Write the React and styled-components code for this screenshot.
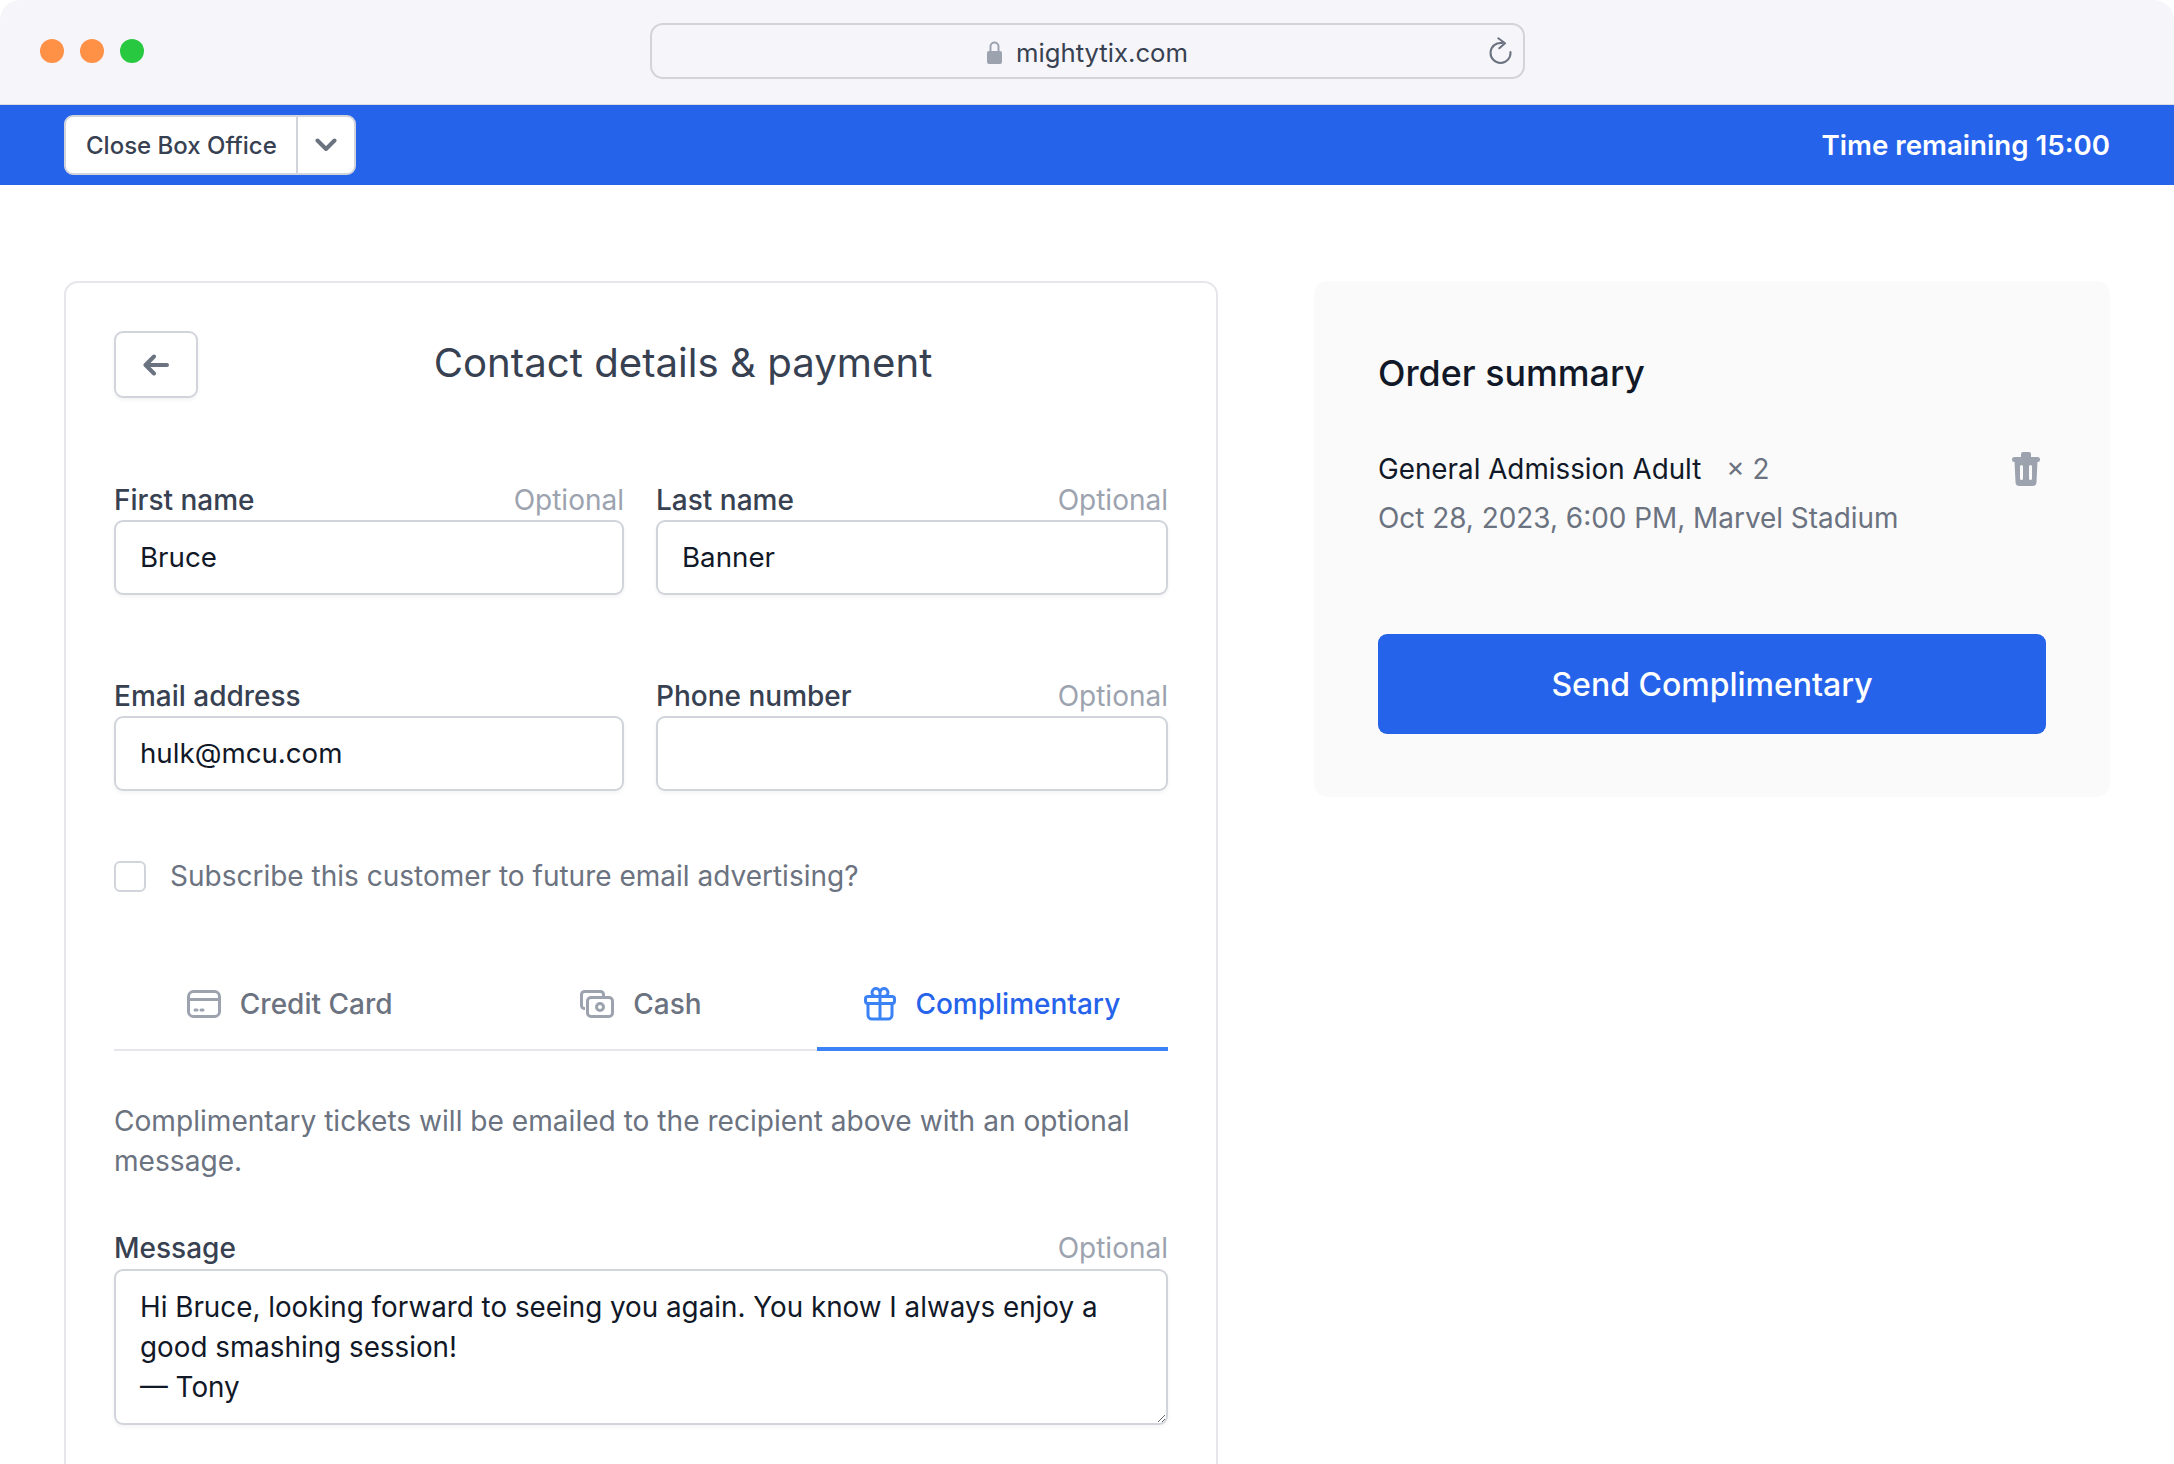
import React from "react";
import styled, { createGlobalStyle } from "styled-components";

const GlobalStyle = createGlobalStyle`
  * { box-sizing: border-box; }
  html, body {
    margin: 0;
    height: 1464px;
    overflow: hidden;
    background: #fff;
    font-family: Inter, "Liberation Sans", sans-serif;
    color: #374151;
  }
`;

const TitleBar = styled.header`
  height: 105px;
  background: #f6f5f9;
  border-bottom: 1px solid #dcdce0;
  border-radius: 20px 20px 0 0;
  display: grid;
  grid-template-columns: 650px 875px 1fr;
  align-items: start;
`;

const Lights = styled.div`
  display: flex;
  gap: 16px;
  padding: 39px 0 0 40px;
`;

const Light = styled.span`
  width: 24px;
  height: 24px;
  border-radius: 50%;
  background: ${({ color }) => color};
`;

const UrlBar = styled.div`
  margin-top: 23px;
  height: 56px;
  border: 2px solid #d3d4d8;
  border-radius: 13px;
  display: flex;
  align-items: center;
  justify-content: center;
  gap: 14px;
  position: relative;
  font-size: 25.7px;
  color: #374151;
  padding-top: 2px;
`;

const Reload = styled.svg`
  position: absolute;
  right: 10px;
  top: 12px;
`;

const BlueBar = styled.div`
  height: 80px;
  background: #2563eb;
  padding: 0 64px;
  display: flex;
  align-items: center;
  justify-content: space-between;
`;

const SplitButton = styled.div`
  width: 292px;
  height: 60px;
  background: #fff;
  border: 2px solid #d1d5db;
  border-radius: 9px;
  display: flex;
`;

const SplitLabel = styled.span`
  flex: 1;
  display: flex;
  align-items: center;
  padding-left: 20px;
  font-size: 24px;
  font-weight: 500;
  color: #374151;
  border-right: 2px solid #d1d5db;
`;

const SplitCaret = styled.span`
  width: 56px;
  display: flex;
  align-items: center;
  justify-content: center;
  color: #6b7280;
`;

const Timer = styled.span`
  color: #fff;
  font-size: 27.7px;
  font-weight: 600;
`;

const Main = styled.main`
  display: grid;
  grid-template-columns: 1154px 796px;
  justify-content: space-between;
  align-items: start;
  padding: 96px 64px 0;
`;

const FormCard = styled.section`
  border: 2px solid #e5e7eb;
  border-radius: 14px;
  padding: 48px 48px 80px;
`;

const CardHeader = styled.div`
  display: flex;
  align-items: center;
  height: 67px;
  margin-bottom: 82px;
`;

const BackButton = styled.button`
  width: 84px;
  height: 67px;
  flex: none;
  background: #fff;
  border: 2px solid #d1d5db;
  border-radius: 9px;
  box-shadow: 0 2px 4px rgba(0, 0, 0, 0.05);
  color: #6b7280;
  display: flex;
  align-items: center;
  justify-content: center;
  padding: 0;
`;

const Title = styled.h1`
  flex: 1;
  margin: -4px 0 0;
  text-align: center;
  font-size: 40.2px;
  font-weight: 400;
  color: #374151;
`;

const FieldGrid = styled.div`
  display: grid;
  grid-template-columns: 510px 512px;
  column-gap: 32px;
  row-gap: 81px;
`;

const FieldHead = styled.div`
  display: flex;
  justify-content: space-between;
  align-items: center;
  height: 40px;
`;

const Label = styled.label`
  font-size: 28px;
  font-weight: 500;
  color: #374151;
`;

const Hint = styled.span`
  font-size: 28px;
  color: #9ca3af;
`;

const Input = styled.input`
  display: block;
  width: 100%;
  height: 75px;
  border: 2px solid #d1d5db;
  border-radius: 9px;
  box-shadow: 0 2px 4px rgba(0, 0, 0, 0.05);
  padding: 0 24px 1px;
  font: 400 27.7px Inter, sans-serif;
  color: #111827;
  outline: none;
`;

const CheckRow = styled.div`
  display: flex;
  align-items: center;
  gap: 24px;
  margin-top: 68px;
  font-size: 28px;
  color: #6b7280;
`;

const CheckBox = styled.span`
  width: 32px;
  height: 31px;
  border: 2px solid #d1d5db;
  border-radius: 6px;
`;

const Tabs = styled.nav`
  display: grid;
  grid-template-columns: repeat(3, 1fr);
  margin-top: 67px;
  border-bottom: 2px solid #e5e7eb;
`;

const Tab = styled.div`
  height: 91px;
  margin-bottom: -2px;
  display: flex;
  align-items: center;
  justify-content: center;
  gap: 19px;
  font-size: 28px;
  font-weight: 500;
  color: ${({ $active }) => ($active ? "#2563eb" : "#6b7280")};
  border-bottom: 4px solid ${({ $active }) => ($active ? "#3b82f6" : "transparent")};
  svg {
    color: ${({ $active }) => ($active ? "#3b82f6" : "#9ca3af")};
  }
`;

const Note = styled.p`
  margin: 50px 0 47px;
  font-size: 28.1px;
  line-height: 40px;
  color: #6b7280;
`;

const Message = styled.textarea`
  display: block;
  width: 100%;
  height: 156px;
  border: 2px solid #d1d5db;
  border-radius: 9px;
  box-shadow: 0 2px 4px rgba(0, 0, 0, 0.05);
  padding: 16px 24px;
  margin-top: 1px;
  font: 400 27.8px/40px Inter, sans-serif;
  color: #111827;
  outline: none;
`;

const SummaryCard = styled.aside`
  height: 516px;
  background: #fafafa;
  border-radius: 14px;
  padding: 64px;
`;

const SummaryTitle = styled.h2`
  margin: 2px 0 46px;
  font-size: 35.8px;
  line-height: 52px;
  font-weight: 500;
  color: #111827;
`;

const ItemRow = styled.div`
  display: flex;
  align-items: center;
  height: 48px;
  font-size: 27.8px;
  color: #111827;
`;

const Quantity = styled.span`
  margin-left: 25px;
  color: #6b7280;
  flex: 1;
`;

const Trash = styled.svg`
  color: #9ca3af;
  margin-right: 6px;
`;

const ItemMeta = styled.div`
  font-size: 27.9px;
  line-height: 48px;
  margin-top: 1px;
  color: #6b7280;
`;

const SendButton = styled.button`
  display: block;
  width: 100%;
  height: 100px;
  margin-top: 92px;
  border: none;
  border-radius: 9px;
  background: #2563eb;
  color: #fff;
  font: 500 32px Inter, sans-serif;
`;

const LockIcon = () => (
  <svg width="15" height="23" viewBox="0 0 15 23" fill="none">
    <path d="M3.500 10V5.500a4 4 0 0 1 8 0V10" stroke="#9ca3af" strokeWidth="2" />
    <rect x="0" y="10" width="15" height="13" rx="2" fill="#9ca3af" />
  </svg>
);

const ReloadIcon = () => (
  <Reload width="24" height="28" viewBox="0 0 24 28" fill="none" stroke="#6b7280" strokeWidth="2" strokeLinecap="round" strokeLinejoin="round">
    <path d="M13 6A10 10 0 1 0 21.500 15" />
    <path d="M9.300 1.300L16 6.300 10.300 11.300" />
  </Reload>
);

const CardIcon = () => (
  <svg width="34" height="28" viewBox="0 0 34 28" fill="none" stroke="currentColor" strokeWidth="3">
    <rect x="1.500" y="1.500" width="31" height="25" rx="5" />
    <path d="M2 9.500h30" />
    <path d="M8 20h2M14 20h2" strokeLinecap="round" />
  </svg>
);

const CashIcon = () => (
  <svg width="34" height="28" viewBox="0 0 34 28" fill="none" stroke="currentColor" strokeWidth="3">
    <path d="M5 18.500H4.500A3 3 0 0 1 1.500 15.500V4.500A3 3 0 0 1 4.500 1.500H20.500A3 3 0 0 1 23.500 4.500V7" />
    <rect x="7.500" y="7.500" width="25" height="19" rx="3.500" />
    <circle cx="20" cy="17" r="3.500" />
  </svg>
);

const GiftIcon = () => (
  <svg width="32" height="34" viewBox="0 0 32 34" fill="none" stroke="currentColor" strokeWidth="3" strokeLinejoin="round">
    <rect x="1.500" y="9.500" width="29" height="7" rx="2.500" />
    <path d="M4 16.500V28a4 4 0 0 0 4 4h16a4 4 0 0 0 4-4V16.500" />
    <path d="M16 9.500V32" />
    <path d="M16 9.500H11.500a4 4 0 1 1 4.500-4zM16 9.500h4.500a4 4 0 1 0-4.500-4z" />
  </svg>
);

const TrashIcon = () => (
  <Trash width="28" height="34" viewBox="0 0 28 34" fill="currentColor">
    <path d="M11 0h6a2 2 0 0 1 2 2v3h6.500a2.500 2.500 0 0 1 0 5H2.500a2.500 2.500 0 0 1 0-5H9V2a2 2 0 0 1 2-2z" />
    <path
      fillRule="evenodd"
      d="M2.500 9h23L24.500 30a4 4 0 0 1-4 4h-13a4 4 0 0 1-4-4zM8 14.500v12a1.500 1.500 0 0 0 3 0v-12a1.500 1.500 0 0 0-3 0zM17 14.500v12a1.500 1.500 0 0 0 3 0v-12a1.500 1.500 0 0 0-3 0z"
    />
  </Trash>
);

const Field = ({ label, optional, value }) => (
  <div>
    <FieldHead>
      <Label>{label}</Label>
      {optional && <Hint>Optional</Hint>}
    </FieldHead>
    <Input readOnly defaultValue={value} />
  </div>
);

export default function App() {
  return (
    <>
      <GlobalStyle />
      <TitleBar>
        <Lights>
          <Light color="#ff9147" />
          <Light color="#ff9147" />
          <Light color="#28c840" />
        </Lights>
        <UrlBar>
          <LockIcon />
          <span>mightytix.com</span>
          <ReloadIcon />
        </UrlBar>
      </TitleBar>
      <BlueBar>
        <SplitButton>
          <SplitLabel>Close Box Office</SplitLabel>
          <SplitCaret>
            <svg width="22" height="14" viewBox="0 0 22 14" fill="none" stroke="currentColor" strokeWidth="4" strokeLinecap="round" strokeLinejoin="round">
              <path d="M2.500 2.500L11 11l8.500-8.500" />
            </svg>
          </SplitCaret>
        </SplitButton>
        <Timer>Time remaining 15:00</Timer>
      </BlueBar>
      <Main>
        <FormCard>
          <CardHeader>
            <BackButton aria-label="Back">
              <svg width="26" height="22" viewBox="0 0 26 22" fill="none" stroke="currentColor" strokeWidth="4" strokeLinecap="round" strokeLinejoin="round">
                <path d="M11 2.500L2.500 11l8.500 8.500M3 11h21" />
              </svg>
            </BackButton>
            <Title>Contact details &amp; payment</Title>
          </CardHeader>
          <FieldGrid>
            <Field label="First name" optional value="Bruce" />
            <Field label="Last name" optional value="Banner" />
            <Field label="Email address" value="hulk@mcu.com" />
            <Field label="Phone number" optional value="" />
          </FieldGrid>
          <CheckRow>
            <CheckBox />
            Subscribe this customer to future email advertising?
          </CheckRow>
          <Tabs>
            <Tab><CardIcon />Credit Card</Tab>
            <Tab><CashIcon />Cash</Tab>
            <Tab $active><GiftIcon />Complimentary</Tab>
          </Tabs>
          <Note>Complimentary tickets will be emailed to the recipient above with an optional message.</Note>
          <FieldHead>
            <Label>Message</Label>
            <Hint>Optional</Hint>
          </FieldHead>
          <Message
            readOnly
            defaultValue={"Hi Bruce, looking forward to seeing you again. You know I always enjoy a good smashing session!\n— Tony"}
          />
        </FormCard>
        <SummaryCard>
          <SummaryTitle>Order summary</SummaryTitle>
          <ItemRow>
            General Admission Adult
            <Quantity>× 2</Quantity>
            <TrashIcon />
          </ItemRow>
          <ItemMeta>Oct 28, 2023, 6:00 PM, Marvel Stadium</ItemMeta>
          <SendButton>Send Complimentary</SendButton>
        </SummaryCard>
      </Main>
    </>
  );
}
